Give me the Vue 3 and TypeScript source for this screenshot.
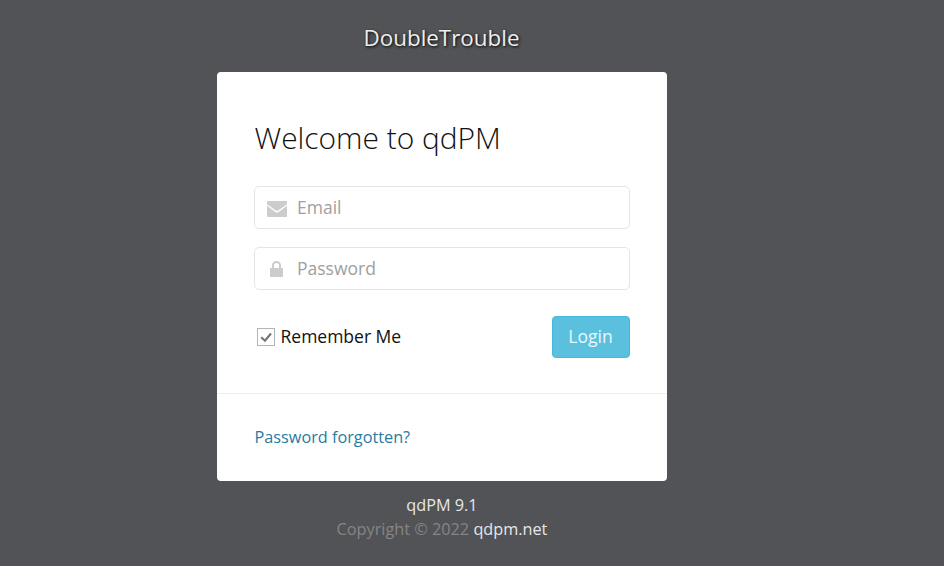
<script setup lang="ts">
import { ref } from 'vue'

const email = ref('')
const password = ref('')
const remember = ref(true)
</script>

<template>
  <main class="login">
    <div class="logo">DoubleTrouble</div>
    <section class="content">
      <form class="form" @submit.prevent>
        <h3>Welcome to qdPM</h3>
        <label class="field">
          <svg class="mail" viewBox="0 0 20 16"><path d="M1 0H19Q20 0 20 1V3.2L11.2 9.6Q10 10.4 8.8 9.6L0 3.2V1Q0 0 1 0ZM0 4.8L8 10.7Q10 12.2 12 10.7L20 4.8V15Q20 16 19 16H1Q0 16 0 15Z"/></svg>
          <input v-model="email" type="text" placeholder="Email">
        </label>
        <label class="field">
          <svg class="lock" viewBox="0 0 13 16"><path fill-rule="evenodd" d="M2 7V4.5A4.5 4.5 0 0 1 11 4.5V7H12Q13 7 13 8V15Q13 16 12 16H1Q0 16 0 15V8Q0 7 1 7ZM4 7H9V4.5A2.5 2.5 0 0 0 4 4.5Z"/></svg>
          <input v-model="password" type="password" placeholder="Password">
        </label>
        <div class="actions">
          <label class="remember">
            <input v-model="remember" type="checkbox">
            <span class="box"><svg v-if="remember" viewBox="0 0 16 16"><path d="M3.2 8.2L7 11.7L13 4.5"/></svg></span>
            <span>Remember Me</span>
          </label>
          <button type="submit">Login</button>
        </div>
      </form>
      <div class="forgot"><a>Password forgotten?</a></div>
    </section>
    <footer><div><a>qdPM 9.1</a></div><div>Copyright © 2022 <a>qdpm.net</a></div></footer>
  </main>
</template>

<style>
body { margin: 0; background: #525356; }
</style>
<style scoped>
* { box-sizing: border-box; }
.login { width: 883px; height: 566px; font-family: "Open Sans", sans-serif; display: flex; flex-direction: column; align-items: center; }
.logo { height: 72px; padding: 22px 0 0; line-height: 31px; font-size: 22.4px; color: #eee; text-shadow: 1px 1px 3px #000; }
.content { width: 450px; height: 409px; background: #fff; border-radius: 4px; }
.form { height: 321px; padding: 47px 37px 0; }
h3 { margin: 0 0 27px 1px; height: 40px; line-height: 38px; font-size: 29.9px; font-weight: 300; color: #111; white-space: nowrap; }
.field { display: flex; align-items: center; width: 375.5px; height: 42.5px; margin: 0 0 18.5px .5px; border: 1px solid #e5e5e5; border-radius: 5px; position: relative; }
.field svg { fill: #ccc; position: absolute; }
.mail { width: 20px; height: 16px; left: 12px; top: 14px; }
.lock { width: 13px; height: 16px; left: 15px; top: 13px; }
.field input { width: 100%; height: 40px; border: 0; outline: 0; background: transparent; padding: 0 12px 1px 42px; font: 17.5px "Open Sans", sans-serif; color: #333; }
.field input::placeholder { color: #a0a0a0; opacity: 1; }
.actions { display: flex; justify-content: space-between; align-items: center; margin-top: 26px; width: 376px; height: 42px; }
.remember { display: flex; align-items: center; font-size: 17.5px; color: #111; height: 24px; margin-bottom: 1px; }
.remember input { position: absolute; opacity: 0; }
.box { width: 18px; height: 18px; margin: 2px 6px 0 3px; border: 1px solid #b4b4b4; display: flex; }
.box svg { width: 16px; height: 16px; fill: none; stroke: #777; stroke-width: 2.2; }
button { width: 78px; height: 42px; padding: 0 0 1px; font: 17.5px "Open Sans", sans-serif; color: #e8f8fd; background: #5bc0de; border: 1px solid #46b8da; border-radius: 4px; }
.forgot { border-top: 1px solid #eee; height: 88px; padding: 31px 37px 0 38px; font-size: 16.25px; line-height: 24px; color: #287ba2; }
footer { margin-top: 12px; padding-left: 1px; font-size: 16.25px; line-height: 24px; color: #858585; text-align: center; }
footer a { color: #e6e6e6; }
</style>
